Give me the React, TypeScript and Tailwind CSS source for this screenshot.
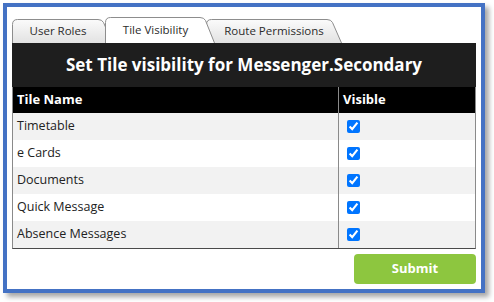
import React from 'react';

type TabProps = { label: string; width: number; active?: boolean; z: string; shift: string };

const Tab: React.FC<TabProps> = ({ label, width, active, z, shift }) => {
  const h = active ? 26 : 24;
  const w = width;
  const d = `M0.5 ${h} V5.5 Q0.5 0.5 5.5 0.5 H${w - 15} Q${w - 11} 0.5 ${w - 9.5} 3.5 L${w - 0.5} ${h}`;
  const gid = `g-${label.replace(/\s/g, '')}`;
  return (
    <div className={`relative flex items-center justify-center pr-[9px] ${z} ${shift}`} style={{ width: w, height: h }}>
      <svg className="absolute inset-0" width={w} height={h} viewBox={`0 0 ${w} ${h}`}>
        <defs>
          <linearGradient id={gid} x1="0" y1="0" x2="0" y2="1">
            <stop offset="0" stopColor="#fbfbfb" />
            <stop offset="1" stopColor="#e2e2e2" />
          </linearGradient>
        </defs>
        <path d={d} fill={active ? '#ffffff' : `url(#${gid})`} stroke="#8d8d8d" strokeWidth="1" />
      </svg>
      <span className="relative text-[11.5px] text-[#2b2b2b]">{label}</span>
    </div>
  );
};

const tiles = ['Timetable', 'e Cards', 'Documents', 'Quick Message', 'Absence Messages'];

export default function App() {
  return (
    <div className="w-[494px] h-[302px] bg-white pt-[3px] pl-[3px] font-['Open_Sans',sans-serif]">
      <div className="w-[482px] h-[290px] border-4 border-[#4472c4] bg-white px-[5px] pt-[10px] shadow-[4px_4px_5px_rgba(0,0,0,0.35)] flex flex-col">
        {/* Tabs */}
        <div className="flex items-end h-[26px]">
          <Tab label="User Roles" width={101} z="z-10" shift="" />
          <Tab label="Tile Visibility" width={110} active z="z-30" shift="-ml-[8px]" />
          <Tab label="Route Permissions" width={136} z="z-20" shift="-ml-[9px] pl-[9px]" />
        </div>

        {/* Title */}
        <div className="h-[44px] bg-[#1e1e1e] flex items-center justify-center">
          <h1 className="text-white font-bold text-[17px]">Set Tile visibility for Messenger.Secondary</h1>
        </div>

        {/* Table */}
        <div className="border-x border-b border-x-[#8a8a8a] border-b-[#4a4a4a]">
          <div className="grid grid-cols-[325px_1fr] h-[26px] bg-black text-white font-bold text-[13px]">
            <div className="flex items-center pl-[4px]">Tile Name</div>
            <div className="flex items-center pl-[4px] border-l border-[#8a8a8a]">Visible</div>
          </div>
          {tiles.map((t, i) => (
            <div
              key={t}
              className={`grid grid-cols-[325px_1fr] h-[27px] text-[12.5px] text-[#222] ${i % 2 === 0 ? 'bg-[#f2f2f2]' : 'bg-white'}`}
            >
              <div className="flex items-center pl-[4px]">{t}</div>
              <div className="flex items-center pl-[8px] border-l border-[#8a8a8a]">
                <input type="checkbox" defaultChecked className="w-[13px] h-[13px]" />
              </div>
            </div>
          ))}
        </div>

        {/* Submit */}
        <div className="flex justify-end mt-[5px]">
          <button className="w-[122px] h-[30px] rounded-[4px] bg-[#8dc63f] text-white font-bold text-[13px]">
            Submit
          </button>
        </div>
      </div>
    </div>
  );
}
